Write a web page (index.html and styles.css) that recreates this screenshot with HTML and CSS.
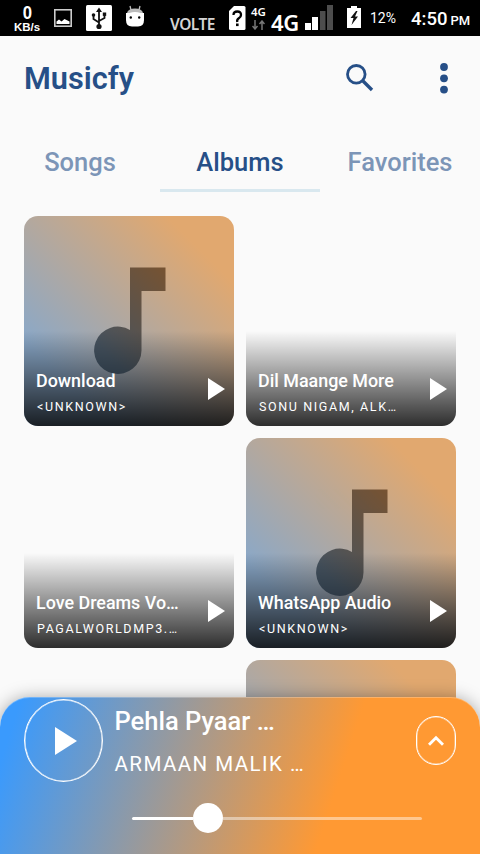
FILE: index.html
```html
<!DOCTYPE html>
<html lang="en">
<head>
<meta charset="utf-8">
<title>Musicfy</title>
<link rel="stylesheet" href="styles.css">
</head>
<body>
<svg width="0" height="0" class="defs">
  <linearGradient id="note-fill" gradientUnits="userSpaceOnUse" x1="75" y1="130" x2="145" y2="60"><stop stop-color="#0c1c2a"/><stop offset="1" stop-color="#3b1b00"/></linearGradient>
  <symbol id="note" viewBox="0 0 210 210"><path fill="url(#note-fill)" d="M106 51.500H141.500V75H117.500V134.500A23.700 23.700 0 1 1 106 114Z"/></symbol>
  <symbol id="play" viewBox="0 0 17 22"><path d="M0 0L17 11L0 22Z"/></symbol>
</svg>
<div class="screen">
  <header class="status">
    <div class="speed"><span class="speed-n">0</span><span class="speed-u">KB/s</span></div>
    <svg class="st-image" width="18" height="18" viewBox="0 0 18 18"><rect x=".8" y=".8" width="16.400" height="16.400" fill="none" stroke="#ccc" stroke-width="1.600"/><path d="M2.500 15V12.500L5 10.500L7.500 12.500L10.500 10L15.500 12.500V15Z" fill="#fff"/></svg>
    <svg class="st-usb" width="26" height="26" viewBox="0 0 26 26"><rect width="26" height="26" rx="1.500" fill="#fff"/><g fill="none" stroke="#111" stroke-width="1.800"><path d="M13 5V21M13 17.500L7.500 14V10M13 16L18.500 13V9"/></g><path d="M13 2.500L16 7H10Z" fill="#111"/><circle cx="13" cy="21.500" r="2.600" fill="#111"/><circle cx="7.500" cy="10" r="1.800" fill="#111"/><rect x="16.800" y="7.500" width="3.400" height="3.400" fill="#111"/></svg>
    <svg class="st-droid" width="20" height="22" viewBox="0 0 20 22"><path d="M5 1L6 5M15 1L14 5" stroke="#bbb" stroke-width="1.300"/><path d="M2 8Q3 3.500 10 3.500T18 8Z" fill="#bbb"/><path d="M1 8H4.500Q10 6 15.500 8H19V15Q19 21.500 13 21.500H7Q1 21.500 1 15Z" fill="#fff"/><circle cx="5.800" cy="12.500" r="1.200"/><circle cx="14.200" cy="12.500" r="1.200"/></svg>
    <span class="volte">VOLTE</span>
    <svg class="st-sim" width="17" height="24" viewBox="0 0 17 24"><path d="M5 0H15Q16.500 0 16.500 1.500V22.500Q16.500 24 15 24H1.500Q0 24 0 22.500V5Z" fill="#fff"/><path d="M4.500 9Q4.500 5.500 8.300 5.500T12 9Q12 11 9.800 12.300T8.300 16" fill="none" stroke="#000" stroke-width="2.300"/><rect x="7" y="17.500" width="2.600" height="2.600"/></svg>
    <div class="net"><span>4G</span><svg width="13" height="10" viewBox="0 0 13 10" fill="none" stroke="#777" stroke-width="1.500"><path d="M3 0V8M.5 6L3 9L5.500 6M10 10V2M7.500 4L10 1L12.500 4"/></svg></div>
    <span class="fourg">4G</span>
    <svg class="st-signal" width="28" height="25" viewBox="0 0 28 25"><path d="M0 18H6V25H0ZM7 12H13V25H7Z" fill="#fff"/><path d="M15 6H20.500V25H15ZM22 0H28V25H22Z" fill="#4d4d4d"/></svg>
    <svg class="st-battery" width="14" height="22" viewBox="0 0 14 22"><path d="M4 0H10V2H14V22H0V2H4Z" fill="#fff"/><path d="M9 5L3.500 12H6.500L4.500 19L11 10.500H8L10.500 5Z" fill="#111"/></svg>
    <span class="percent">12%</span>
    <span class="clock">4:50<small>PM</small></span>
  </header>

  <div class="appbar">
    <h1>Musicfy</h1>
    <svg class="search" width="28" height="28" viewBox="0 0 28 28" fill="none" stroke="#264f87"><circle cx="10.300" cy="10.300" r="8.800" stroke-width="2.800"/><path d="M17 17L26 26" stroke-width="3.300"/></svg>
    <svg class="more" width="8" height="31" viewBox="0 0 8 31" fill="#264f87"><circle cx="4" cy="4" r="3.900"/><circle cx="4" cy="15.300" r="3.900"/><circle cx="4" cy="26.600" r="3.900"/></svg>
  </div>

  <nav class="tabs"><span>Songs</span><span class="active">Albums</span><span>Favorites</span></nav>

  <main class="grid">
    <article class="card art"><svg class="note"><use href="#note"/></svg><div class="shade"><div class="meta"><b>Download</b><i>&lt;UNKNOWN&gt;</i></div><svg class="play"><use href="#play"/></svg></div></article>
    <article class="card"><div class="shade"><div class="meta"><b>Dil Maange More</b><i>SONU NIGAM, ALK…</i></div><svg class="play"><use href="#play"/></svg></div></article>
    <article class="card"><div class="shade"><div class="meta"><b>Love Dreams Vo…</b><i>PAGALWORLDMP3.…</i></div><svg class="play"><use href="#play"/></svg></div></article>
    <article class="card art"><svg class="note"><use href="#note"/></svg><div class="shade"><div class="meta"><b>WhatsApp Audio</b><i>&lt;UNKNOWN&gt;</i></div><svg class="play"><use href="#play"/></svg></div></article>
    <div></div>
    <article class="card art"></article>
  </main>

  <footer class="player">
    <div class="now">
      <div class="big"><svg width="22" height="28" viewBox="0 0 22 28"><path d="M0 0L22 14L0 28Z" fill="#fff"/></svg></div>
      <div class="track"><b>Pehla Pyaar …</b><i>ARMAAN MALIK …</i></div>
      <div class="up"><svg width="16" height="11" viewBox="0 0 16 11"><path d="M1 9.700L8 2.700L15 9.700" fill="none" stroke="#fff" stroke-width="2.900"/></svg></div>
    </div>
    <div class="seek"><div class="done"></div><div class="knob"></div><div class="rest"></div></div>
  </footer>
</div>
</body>
</html>
```
FILE: styles.css
```css
* { box-sizing: border-box; }
body { margin: 0; background: #fafafa; font-family: Roboto, "Liberation Sans", sans-serif; }
.defs { position: absolute; }
.screen { width: 480px; height: 854px; overflow: hidden; position: relative; background: #fafafa; }
svg { display: block; flex: none; }
i { font-style: normal; }
span, b, i { white-space: nowrap; }

.status { height: 36px; background: #000; color: #fff; display: flex; align-items: flex-start; }
.speed { width: 26px; margin: 5px 0 0 14px; display: flex; flex-direction: column; align-items: center; }
.speed-n { font: 700 19px/16px "Liberation Sans", sans-serif; transform: scaleX(.88); }
.speed-u { font: 700 11.500px/12px "Liberation Sans", sans-serif; }
.st-image { margin: 9px 0 0 14px; }
.st-usb { margin: 5px 0 0 14px; }
.st-droid { margin: 5px 0 0 13px; }
.volte { width: 48px; margin: 15px 0 0 25px; font: 600 15.500px/19px "Noto Sans", sans-serif; color: #d4d4d4; letter-spacing: -.5px; }
.st-sim { margin: 6px 0 0 11px; }
.net { width: 16px; margin: 6px 0 0 5px; font: 600 11.500px/12px "Noto Sans", sans-serif; }
.net svg { margin: 2px 0 0 1px; }
.fourg { width: 29px; margin: 10px 0 0 4px; font: 600 22px/24px "Noto Sans", sans-serif; letter-spacing: -.3px; }
.st-signal { margin: 5px 0 0 5px; }
.st-battery { margin: 6px 0 0 14px; }
.percent { width: 28px; margin: 9px 0 0 9px; font: 400 14px/18px Roboto, sans-serif; }
.clock { margin: 7px 0 0 13px; font: 500 18.500px/24px Roboto, sans-serif; }
.clock small { font-size: 13px; margin-left: 3px; }

.appbar { height: 84px; padding: 0 32px 0 24px; display: flex; align-items: center; color: #264f87; }
h1 { margin: 2px 0 0; flex: 1; font: 600 30.700px/36px Roboto, sans-serif; }
.search { margin-right: 66px; }

.tabs { height: 72px; display: grid; grid-template-columns: repeat(3, 160px); color: #7c95b7; text-align: center; font: 500 25.500px/84px Roboto, sans-serif; }
.tabs span { height: 72px; }
.tabs .active { color: #264f87; border-bottom: 3px solid #d9e8ef; }

.grid { padding: 24px 24px 0; display: grid; grid-template-columns: 210px 210px; grid-auto-rows: 210px; gap: 12px; }
.card { border-radius: 14px; overflow: hidden; display: grid; color: #fff; }
.card > * { grid-area: 1 / 1; }
.art { background: linear-gradient(45deg, #8aa8c8 20%, #e1a86f 84%); }
.note { width: 210px; height: 210px; opacity: .6; }
.shade { align-self: end; height: 95px; padding: 38px 9px 0 12px; display: flex; background: linear-gradient(to bottom, rgba(0,0,0,0), rgba(0,0,0,.82)); }
.meta { flex: 1; display: flex; flex-direction: column; }
.meta b { font: 500 17.900px/24px Roboto, sans-serif; }
.meta i { font: 400 12.500px/18px Roboto, sans-serif; letter-spacing: 1.620px; margin-top: 5px; margin-left: 1px; }
.play { width: 17px; height: 22px; margin-top: 9px; fill: #fff; }

.player { position: absolute; left: 0; right: 0; bottom: 0; height: 157px; border-radius: 30px 30px 0 0; color: #fff; padding: 2px 24px 0; background: linear-gradient(108.1deg, #3a9afd 4%, #ff9933 69%); box-shadow: 0 2px 18px rgba(0,0,0,.38), inset 0 1px rgba(255,255,255,.25); }
.now { display: flex; height: 83px; }
.big { width: 79px; height: 83px; border: 1.500px solid #fff; box-shadow: inset 0 0 0 .5px rgba(255,255,255,.8); border-radius: 50%; display: flex; align-items: center; padding-left: 30px; }
.track { flex: 1; padding-left: 11.500px; display: flex; flex-direction: column; }
.track b { font: 500 25.500px/30px Roboto, sans-serif; margin-top: 7px; }
.track i { font: 400 20.500px/24px Roboto, sans-serif; letter-spacing: 1.450px; margin-top: 16px; }
.up { width: 40px; height: 49px; border: 1.500px solid #fff; box-shadow: inset 0 0 0 .5px rgba(255,255,255,.6); border-radius: 20px; margin-top: 17px; display: flex; align-items: center; justify-content: center; }
.seek { display: flex; align-items: center; margin: 21px 34px 0 108px; height: 30px; }
.done { width: 61px; height: 3px; background: #fff; border-radius: 2px 0 0 2px; }
.knob { width: 30px; height: 30px; border-radius: 50%; background: #fff; }
.rest { flex: 1; height: 3px; background: rgba(255,255,255,.45); border-radius: 0 2px 2px 0; }
```
